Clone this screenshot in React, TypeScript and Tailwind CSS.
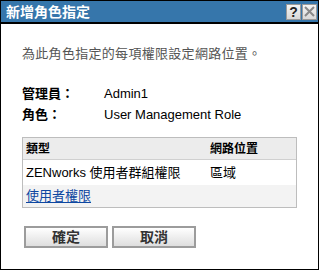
export default function App() {
  return (
    <div className="w-[319px] h-[270px] bg-white border border-black flex flex-col [font-family:'Liberation_Sans','Noto_Sans_CJK_TC',sans-serif]">
      {/* Title bar */}
      <div className="h-[23px] bg-[#3676ab] border-b-2 border-black flex items-center justify-between pl-[5px] pr-[1px] shrink-0">
        <span className="text-white font-bold text-[14px] leading-none">新增角色指定</span>
        <div className="flex gap-[1px]">
          <span className="w-[15px] h-[16px] bg-gradient-to-b from-[#f4f4f4] to-[#d8d8d8] border border-[#9a9a9a] flex items-center justify-center text-[14px] font-bold text-[#222] leading-none">?</span>
          <span className="w-[15px] h-[16px] bg-gradient-to-b from-[#f4f4f4] to-[#d8d8d8] border border-[#9a9a9a] flex items-center justify-center">
            <svg width="11" height="11" viewBox="0 0 11 11">
              <path d="M1 1L10 10M10 1L1 10" stroke="#888" strokeWidth="2" />
            </svg>
          </span>
        </div>
      </div>

      <div className="flex flex-col pl-[21px] pr-[21px] pt-[21px]">
        <p className="text-[13px] text-[#555] leading-[18px] tracking-[0.3px]">為此角色指定的每項權限設定網路位置。</p>

        <div className="mt-[20px] grid grid-cols-[82px_1fr] text-[13px] leading-[21px] text-black">
          <span className="font-bold">管理員：</span>
          <span>Admin1</span>
          <span className="font-bold">角色：</span>
          <span>User Management Role</span>
        </div>

        {/* Table */}
        <div className="mt-[12px] border border-[#bdbdbd] text-[13px] text-black">
          <div className="flex h-[22px] items-center bg-[#ececec] border-b border-[#d0d0d0] font-bold text-[12px]">
            <span className="w-[187px] pl-[3px]">類型</span>
            <span>網路位置</span>
          </div>
          <div className="flex h-[25px] items-center bg-white">
            <span className="w-[187px] pl-[3px]">ZENworks 使用者群組權限</span>
            <span>區域</span>
          </div>
          <div className="flex h-[22px] items-center bg-[#f3f3f3]">
            <a className="pl-[3px] text-[#0d47a1] underline underline-offset-2">使用者權限</a>
          </div>
        </div>

        {/* Buttons */}
        <div className="mt-[18px] flex gap-[4px] pl-[2px]">
          <button className="w-[84px] h-[22px] border-2 border-[#9c9c9c] bg-gradient-to-b from-white to-[#dedede] text-[14px] font-bold text-[#333] leading-none">確定</button>
          <button className="w-[84px] h-[22px] border-2 border-[#9c9c9c] bg-gradient-to-b from-white to-[#dedede] text-[14px] font-bold text-[#333] leading-none">取消</button>
        </div>
      </div>
    </div>
  )
}
